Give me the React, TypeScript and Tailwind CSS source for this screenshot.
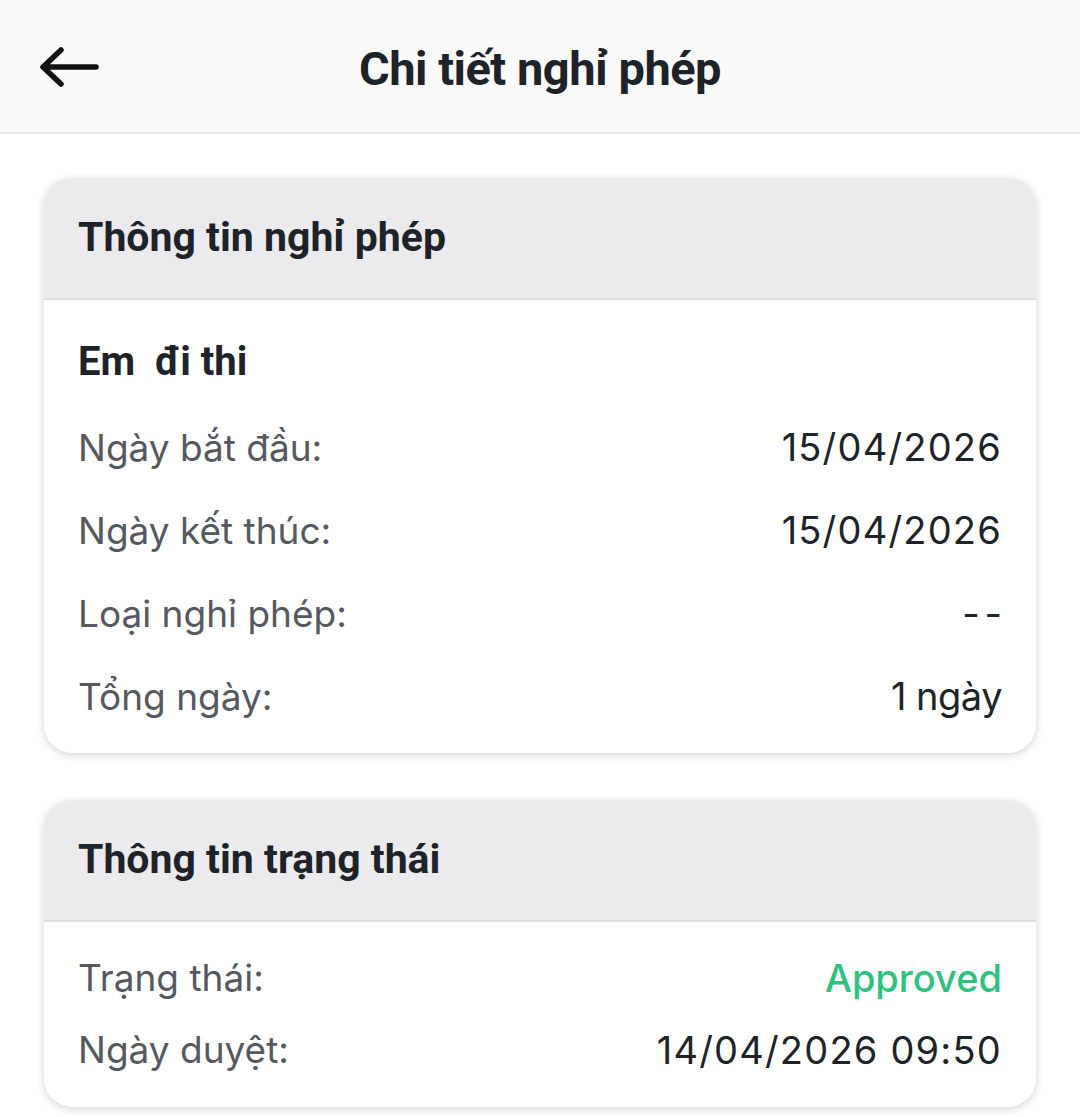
const rows1 = [
  { label: "Ngày bắt đầu:", value: "15/04/2026", cls: "tracking-[1.2px]" },
  { label: "Ngày kết thúc:", value: "15/04/2026", cls: "tracking-[1.2px]" },
  { label: "Loại nghỉ phép:", value: "- -", cls: "tracking-[-3px] pr-[3px]" },
  { label: "Tổng ngày:", value: "1 ngày", cls: "tracking-[-0.5px]" },
];

const Row = ({ label, value, valueClass, h }: { label: string; value: string; valueClass: string; h: string }) => (
  <div className={`flex items-center justify-between ${h}`}>
    <span className="text-[37px] text-[#55595f]">{label}</span>
    <span className={`text-[38px] ${valueClass}`}>{value}</span>
  </div>
);

const Card = ({ title, children }: { title: string; children: React.ReactNode }) => (
  <div className="rounded-[28px] bg-white shadow-[0_2px_8px_rgba(0,0,0,0.18)] overflow-hidden">
    <div className="h-[122px] bg-[#ebebee] border-b-2 border-[#dedee2] flex items-center px-[34px]">
      <h2 className="font-['Roboto',sans-serif] font-bold text-[41px] text-[#1e2329]">{title}</h2>
    </div>
    {children}
  </div>
);

export default function App() {
  return (
    <div className="w-[1080px] h-[1117px] bg-white font-['Inter',sans-serif] overflow-hidden">
      {/* header */}
      <div className="h-[134px] pt-[6px] bg-[#fafafa] border-b-2 border-[#e8e8e8] relative flex items-center justify-center">
        <svg className="absolute left-[38px] top-[47px]" width="62" height="40" viewBox="0 0 62 40" fill="none">
          <path d="M58 20H6M23 3L5 20l18 17" stroke="#111" strokeWidth="5.5" strokeLinecap="round" strokeLinejoin="round" />
        </svg>
        <h1 className="font-['Roboto',sans-serif] font-bold text-[47px] text-[#1e2329] tracking-[-0.5px]">Chi tiết nghỉ phép</h1>
      </div>

      <div className="px-[44px] pt-[44px] flex flex-col gap-[47px]">
        <Card title="Thông tin nghỉ phép">
          <div className="px-[34px] pt-[34px] pb-[15px]">
            <div className="font-['Roboto',sans-serif] font-bold text-[40px] text-[#1e2329] h-[56px] flex items-center whitespace-pre">Em  đi thi</div>
            <div className="mt-[16px]">
              {rows1.map((r) => (
                <Row key={r.label} label={r.label} value={r.value} valueClass={`text-[#1e2329] ${r.cls}`} h="h-[83px]" />
              ))}
            </div>
          </div>
        </Card>

        <Card title="Thông tin trạng thái">
          <div className="px-[34px] pt-[20px] pb-[21px]">
            <Row label="Trạng thái:" value="Approved" valueClass="text-[#2ec27e] font-medium" h="h-[72px]" />
            <Row label="Ngày duyệt:" value="14/04/2026 09:50" valueClass="text-[#1e2329] tracking-[1.2px]" h="h-[72px]" />
          </div>
        </Card>
      </div>
    </div>
  );
}
